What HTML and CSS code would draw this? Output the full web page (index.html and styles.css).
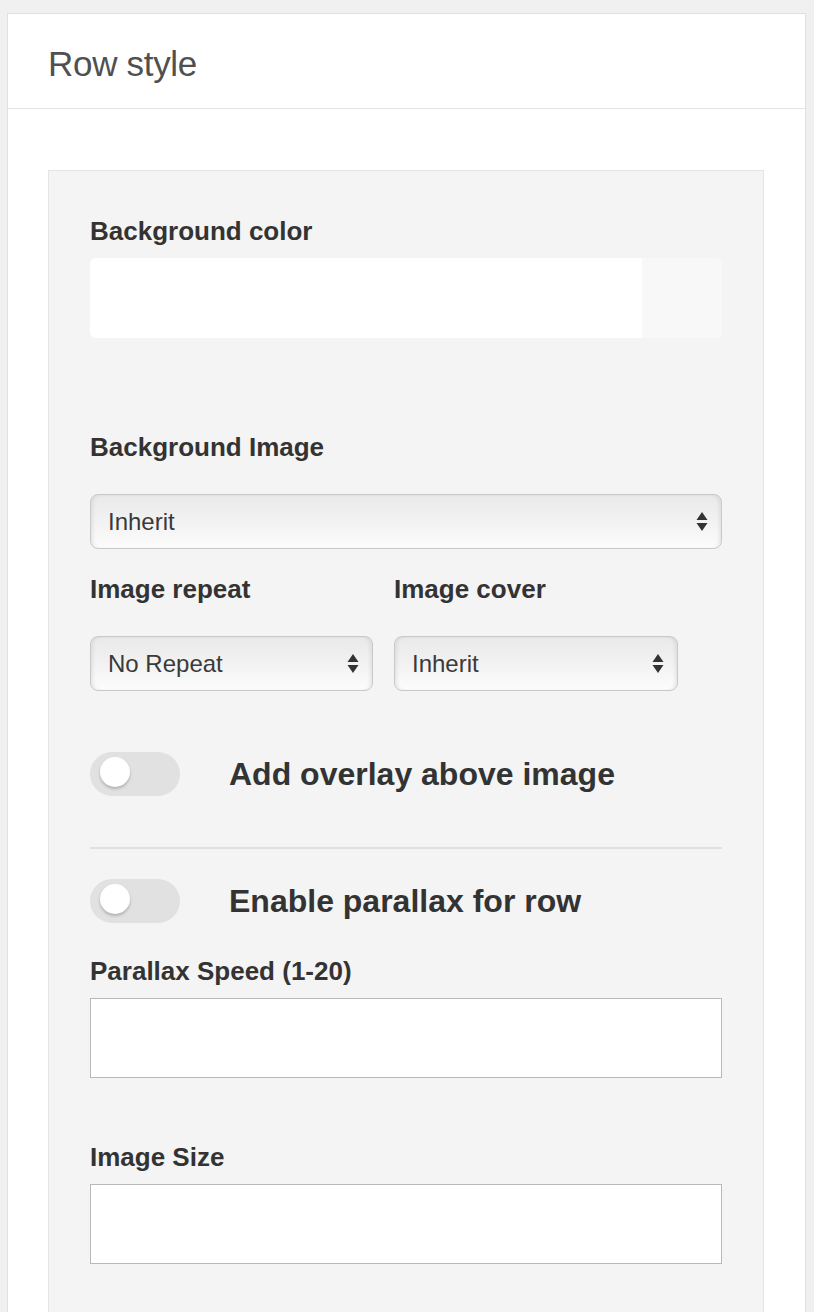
FILE: index.html
```html
<!DOCTYPE html>
<html>
<head>
<meta charset="utf-8">
<title>Row style</title>
<link rel="stylesheet" href="styles.css">
</head>
<body>
<div class="card">
  <div class="card-header">Row style</div>
  <div class="card-body">
    <div class="panel">
      <div class="label">Background color</div>
      <div class="color-input">
        <div class="color-text"></div>
        <div class="color-swatch"></div>
      </div>

      <div class="label label-image">Background Image</div>
      <div class="select select-first">
        <span class="select-text">Inherit</span>
        <svg class="arrows" width="12" height="20" viewBox="0 0 12 20"><path d="M6 0 L11.5 8 L0.5 8 Z M0.5 11 L11.5 11 L6 19 Z" fill="#333"/></svg>
      </div>

      <div class="two-col">
        <div class="col">
          <div class="label">Image repeat</div>
          <div class="select select-col">
            <span class="select-text">No Repeat</span>
            <svg class="arrows" width="12" height="20" viewBox="0 0 12 20"><path d="M6 0 L11.5 8 L0.5 8 Z M0.5 11 L11.5 11 L6 19 Z" fill="#333"/></svg>
          </div>
        </div>
        <div class="col">
          <div class="label">Image cover</div>
          <div class="select select-col">
            <span class="select-text">Inherit</span>
            <svg class="arrows" width="12" height="20" viewBox="0 0 12 20"><path d="M6 0 L11.5 8 L0.5 8 Z M0.5 11 L11.5 11 L6 19 Z" fill="#333"/></svg>
          </div>
        </div>
      </div>

      <div class="toggle-row toggle-overlay">
        <div class="toggle"><div class="knob"></div></div>
        <div class="toggle-label">Add overlay above image</div>
      </div>

      <div class="divider"></div>

      <div class="toggle-row toggle-parallax">
        <div class="toggle"><div class="knob"></div></div>
        <div class="toggle-label">Enable parallax for row</div>
      </div>

      <div class="label label-speed">Parallax Speed (1-20)</div>
      <div class="text-input"></div>

      <div class="label label-size">Image Size</div>
      <div class="text-input"></div>
    </div>
  </div>
</div>
</body>
</html>
```

FILE: styles.css
```css
html, body {
  margin: 0;
  padding: 0;
  background: #f0f0f0;
  font-family: "Liberation Sans", Arial, Helvetica, sans-serif;
  color: #333;
}

.card {
  margin: 13px 0 0 7px;
  width: 797px;
  background: #fff;
  border: 1px solid #e0e0e0;
  border-bottom: none;
  min-height: 1400px;
}

.card-header {
  height: 95px;
  box-sizing: border-box;
  padding: 6px 0 0 40px;
  display: flex;
  align-items: center;
  font-size: 35px;
  color: #505050;
  border-bottom: 1px solid #e4e4e4;
  letter-spacing: -0.3px;
}

.card-body {
  padding: 61px 41px 0 40px;
}

.panel {
  background: #f4f4f4;
  border: 1px solid #e4e4e4;
  padding: 42px 41px 200px 41px;
}

.label {
  font-size: 26px;
  font-weight: bold;
  line-height: 36px;
  color: #333;
}

.color-input {
  margin-top: 9px;
  height: 80px;
  display: flex;
  border-radius: 6px;
  overflow: hidden;
}

.color-text {
  flex: 1;
  background: #fff;
}

.color-swatch {
  width: 80px;
  background: #f8f8f8;
}

.label-image {
  margin-top: 91px;
}

.select {
  box-sizing: border-box;
  height: 55px;
  margin-top: 29px;
  border: 1px solid #c9c9c9;
  border-radius: 8px;
  background: linear-gradient(#e9e9e9 0%, #f1f1f1 45%, #fcfcfc 100%);
  box-shadow: inset 3px 0 4px -2px rgba(0,0,0,0.12), inset -3px 0 4px -2px rgba(0,0,0,0.12), inset 0 -2px 3px rgba(255,255,255,0.9);
  display: flex;
  align-items: center;
  justify-content: space-between;
  padding: 0 13px 0 17px;
}

.select-text {
  font-size: 24px;
  color: #3a3a3a;
}

.arrows {
  display: block;
}

.two-col {
  display: grid;
  grid-template-columns: 283px 284px;
  column-gap: 21px;
  margin-top: 22px;
}

.toggle-row {
  display: flex;
  align-items: center;
  gap: 49px;
}

.toggle-overlay {
  margin-top: 61px;
}

.toggle-parallax {
  margin-top: 30px;
}

.toggle {
  position: relative;
  width: 90px;
  height: 44px;
  border-radius: 22px;
  background: #e1e1e1;
  flex-shrink: 0;
}

.knob {
  position: absolute;
  left: 10px;
  top: 5px;
  width: 30px;
  height: 30px;
  border-radius: 50%;
  background: #fff;
  box-shadow: 0 2px 3px rgba(0,0,0,0.22);
}

.toggle-label {
  font-size: 32px;
  font-weight: bold;
  color: #333;
  line-height: 44px;
}

.divider {
  margin-top: 51px;
  height: 2px;
  background: #e0e0e0;
}

.label-speed {
  margin-top: 30px;
}

.text-input {
  margin-top: 9px;
  box-sizing: border-box;
  height: 80px;
  background: #fff;
  border: 1px solid #b9b9b9;
}

.label-size {
  margin-top: 61px;
}
```
